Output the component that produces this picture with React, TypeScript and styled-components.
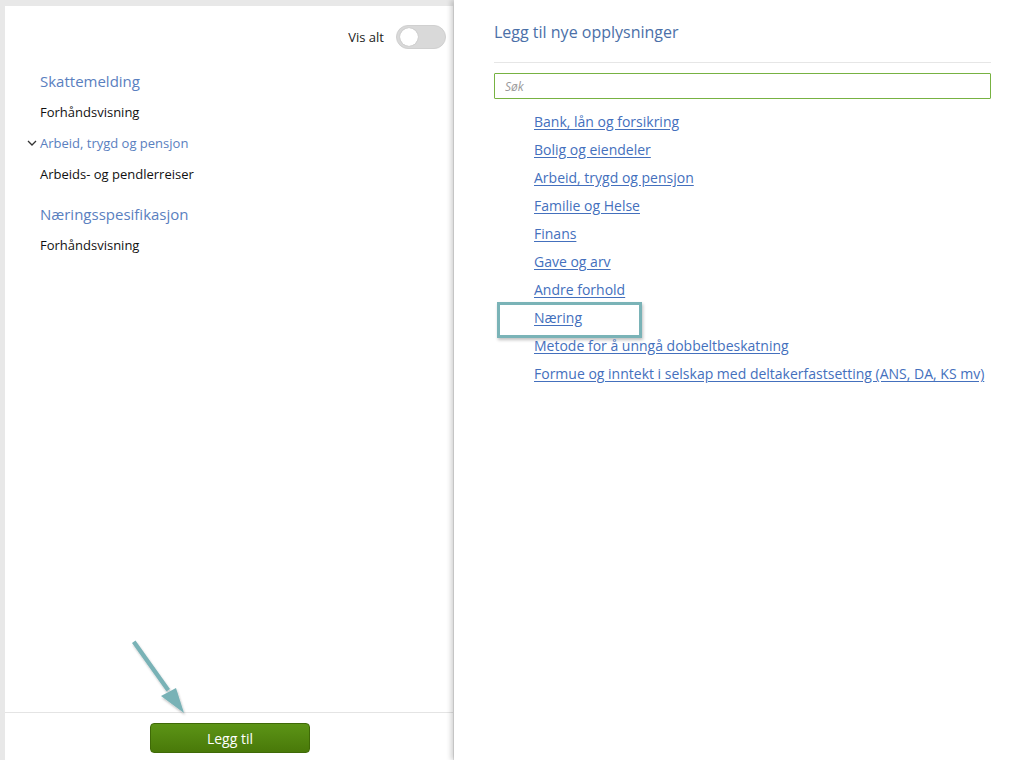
import React, { useState } from "react";
import styled, { createGlobalStyle } from "styled-components";

const GlobalStyle = createGlobalStyle`
  html, body {
    margin: 0;
    padding: 0;
    height: 760px;
    overflow: hidden;
    background: #e8e8e8;
    font-family: "Open Sans", "Liberation Sans", sans-serif;
  }
  * { box-sizing: border-box; }
`;

const Page = styled.div`
  display: flex;
  height: 760px;
`;

const SidePanel = styled.div`
  position: relative;
  width: 448px;
  margin: 6px 0 0 5px;
  background: #fff;
  display: flex;
  flex-direction: column;
`;

const ToggleRow = styled.div`
  display: flex;
  justify-content: flex-end;
  align-items: center;
  gap: 12px;
  padding: 19px 7px 0 0;
  font-size: 13px;
  color: #222;
`;

const Switch = styled.button<{ on: boolean }>`
  position: relative;
  width: 50px;
  height: 24px;
  border-radius: 12px;
  border: 1px solid #d0d0d0;
  background: ${(p) => (p.on ? "#6d9f2a" : "#d9d9d9")};
  padding: 0;
  cursor: pointer;

  &::after {
    content: "";
    position: absolute;
    top: 2px;
    left: ${(p) => (p.on ? "28px" : "3px")};
    width: 18px;
    height: 18px;
    border-radius: 50%;
    background: #fff;
    box-shadow: 0 0 1px rgba(0, 0, 0, 0.3);
  }
`;

const Nav = styled.nav`
  margin-top: 16px;
  padding-left: 35px;
`;

const NavGroup = styled.div`
  & + & {
    margin-top: 9px;
  }
`;

const NavRow = styled.div<{ heading?: boolean; size?: number }>`
  display: flex;
  align-items: center;
  height: 31px;
  font-size: ${(p) => (p.heading ? p.size || 15 : 13)}px;
  color: ${(p) => (p.heading ? "#5a80c0" : "#111")};
`;

const Chevron = styled.svg`
  width: 10px;
  height: 10px;
  margin-left: -13px;
  margin-right: 3px;
`;

const Filler = styled.div`
  flex: 1;
`;

const Footer = styled.div`
  border-top: 1px solid #e4e4e4;
  padding: 10px 0 0 2px;
  height: 48px;
  display: flex;
  justify-content: center;
  align-items: flex-start;
`;

const AddButton = styled.button`
  width: 160px;
  height: 30px;
  border: 1px solid #3f6a07;
  border-radius: 4px;
  background: linear-gradient(#5c9416, #497909);
  color: #fff;
  font-family: inherit;
  font-size: 14px;
  cursor: pointer;
`;

const Pointer = styled.svg`
  position: absolute;
  left: 116px;
  top: 624px;
  width: 80px;
  height: 90px;
  overflow: visible;
`;

const Drawer = styled.aside`
  flex: 1;
  margin-left: 1px;
  background: #fff;
  box-shadow: -3px 0 5px rgba(0, 0, 0, 0.18);
  padding: 21px 30px 0 40px;
  position: relative;
  z-index: 1;
`;

const Title = styled.h2`
  margin: 0;
  font-size: 16px;
  line-height: 22px;
  font-weight: 400;
  color: #4b70a8;
`;

const Rule = styled.hr`
  margin: 19px 0 0;
  border: none;
  border-top: 1px solid #e6e6e6;
`;

const Search = styled.input`
  display: block;
  width: 100%;
  height: 26px;
  margin-top: 10px;
  border: 1px solid #77b242;
  border-radius: 1px;
  padding: 0 10px;
  font-family: inherit;
  font-size: 12px;
  outline: none;

  &::placeholder {
    color: #999;
    font-style: italic;
  }
`;

const LinkList = styled.ul`
  list-style: none;
  margin: 8px 0 0;
  padding: 0 0 0 40px;
`;

const LinkItem = styled.li<{ marked?: boolean }>`
  position: relative;
  height: 28px;
  display: flex;
  align-items: center;

  &::before {
    content: "";
    display: ${(p) => (p.marked ? "block" : "none")};
    position: absolute;
    left: -37px;
    top: -1px;
    width: 139px;
    height: 30px;
    border: 3px solid #7ab3b7;
    box-shadow: 1px 2px 3px rgba(0, 0, 0, 0.25);
    pointer-events: none;
  }
`;

const Link = styled.a`
  font-size: 14px;
  color: #4470bd;
  text-decoration: underline;
  text-underline-offset: 2px;
  cursor: pointer;
`;

const categories = [
  "Bank, lån og forsikring",
  "Bolig og eiendeler",
  "Arbeid, trygd og pensjon",
  "Familie og Helse",
  "Finans",
  "Gave og arv",
  "Andre forhold",
  "Næring",
  "Metode for å unngå dobbeltbeskatning",
  "Formue og inntekt i selskap med deltakerfastsetting (ANS, DA, KS mv)",
];

const App = () => {
  const [showAll, setShowAll] = useState(false);

  return (
    <>
      <GlobalStyle />
      <Page>
        <SidePanel>
          <ToggleRow>
            Vis alt
            <Switch on={showAll} onClick={() => setShowAll(!showAll)} />
          </ToggleRow>

          <Nav>
            <NavGroup>
              <NavRow heading>Skattemelding</NavRow>
              <NavRow>Forhåndsvisning</NavRow>
              <NavRow heading size={13}>
                <Chevron viewBox="0 0 10 10">
                  <path d="M1 3 L5 7 L9 3" fill="none" stroke="#333" strokeWidth="1.3" />
                </Chevron>
                Arbeid, trygd og pensjon
              </NavRow>
              <NavRow>Arbeids- og pendlerreiser</NavRow>
            </NavGroup>
            <NavGroup>
              <NavRow heading>Næringsspesifikasjon</NavRow>
              <NavRow>Forhåndsvisning</NavRow>
            </NavGroup>
          </Nav>

          <Filler />

          <Pointer viewBox="0 0 80 90">
            <defs>
              <filter id="soft" x="-20%" y="-20%" width="140%" height="140%">
                <feDropShadow dx="1" dy="2" stdDeviation="1" floodOpacity="0.25" />
              </filter>
            </defs>
            <g filter="url(#soft)" fill="#79b2b6">
              <path d="M11 13 L14.5 10.6 L49 59 L45.5 61.4 Z" />
              <path d="M40 66 L55 58 L63 83 Z" />
            </g>
          </Pointer>

          <Footer>
            <AddButton>Legg til</AddButton>
          </Footer>
        </SidePanel>

        <Drawer>
          <Title>Legg til nye opplysninger</Title>
          <Rule />
          <Search placeholder="Søk" />
          <LinkList>
            {categories.map((name) => (
              <LinkItem key={name} marked={name === "Næring"}>
                <Link>{name}</Link>
              </LinkItem>
            ))}
          </LinkList>
        </Drawer>
      </Page>
    </>
  );
};

export default App;
